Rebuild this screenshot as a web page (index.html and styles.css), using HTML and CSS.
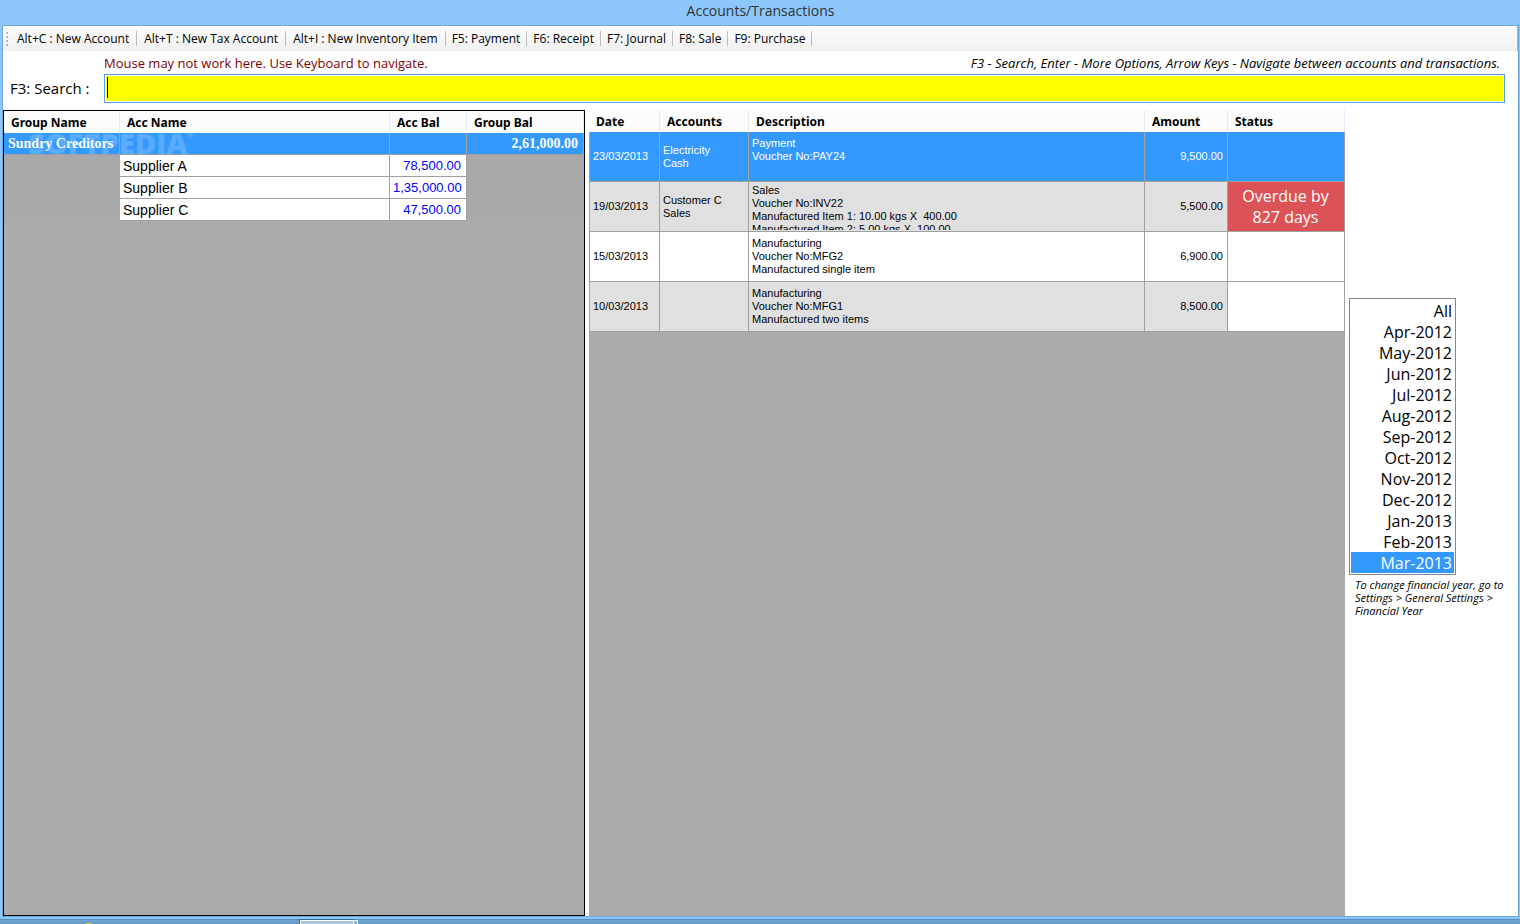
FILE: index.html
```html
<!DOCTYPE html>
<html lang="en">
<head>
  <meta charset="UTF-8" />
  <meta name="viewport" content="width=device-width, initial-scale=1.0" />
  <title>Accounts/Transactions</title>
  <link rel="stylesheet" href="styles.css">
</head>
<body>
  <div class="window">
    <h1 class="title">Accounts/Transactions</h1>
    <div class="client">
      <div class="toolbar">
        <span class="grip"></span>
        <button type="button">Alt+C : New Account</button>
        <button type="button">Alt+T : New Tax Account</button>
        <button type="button">Alt+I : New Inventory Item</button>
        <button type="button" class="fkey">F5: Payment</button>
        <button type="button" class="fkey">F6: Receipt</button>
        <button type="button" class="fkey">F7: Journal</button>
        <button type="button" class="fkey">F8: Sale</button>
        <button type="button" class="fkey">F9: Purchase</button>
      </div>

      <div class="search">
        <p class="warning">Mouse may not work here. Use Keyboard to navigate.</p>
        <p class="hint">F3 - Search, Enter - More Options, Arrow Keys - Navigate between accounts and transactions.</p>
        <label for="search">F3: Search :</label>
        <div class="field">
          <input type="text" id="search" />
          <span class="caret"></span>
        </div>
      </div>

      <div class="main">
        <div class="accounts">
          <table>
            <colgroup>
              <col class="c-group"><col class="c-name"><col class="c-bal"><col class="c-total">
            </colgroup>
            <thead>
              <tr><th>Group Name</th><th>Acc Name</th><th>Acc Bal</th><th>Group Bal</th></tr>
            </thead>
            <tbody>
              <tr class="group selected"><td>Sundry Creditors</td><td></td><td></td><td class="num">2,61,000.00</td></tr>
              <tr><td class="blank"></td><td>Supplier A</td><td class="num">78,500.00</td><td class="blank"></td></tr>
              <tr><td class="blank"></td><td>Supplier B</td><td class="num">1,35,000.00</td><td class="blank"></td></tr>
              <tr><td class="blank"></td><td>Supplier C</td><td class="num">47,500.00</td><td class="blank"></td></tr>
            </tbody>
          </table>
          <div class="watermark">SOFTPEDIA<sup>®</sup></div>
        </div>

        <div class="transactions">
          <table>
            <colgroup>
              <col class="c-date"><col class="c-accounts"><col><col class="c-amount"><col class="c-status">
            </colgroup>
            <thead>
              <tr><th>Date</th><th>Accounts</th><th>Description</th><th>Amount</th><th>Status</th></tr>
            </thead>
            <tbody>
              <tr class="selected">
                <td>23/03/2013</td>
                <td>Electricity<br>Cash</td>
                <td><div class="desc">Payment<br>Voucher No:PAY24<br>&nbsp;</div></td>
                <td class="num">9,500.00</td>
                <td class="status"></td>
              </tr>
              <tr>
                <td>19/03/2013</td>
                <td>Customer C<br>Sales</td>
                <td><div class="desc">Sales<br>Voucher No:INV22<br>Manufactured Item 1: 10.00 kgs X&nbsp; 400.00<br>Manufactured Item 2: 5.00 kgs X&nbsp; 100.00</div></td>
                <td class="num">5,500.00</td>
                <td class="status overdue">Overdue by<br>827 days</td>
              </tr>
              <tr>
                <td>15/03/2013</td>
                <td></td>
                <td><div class="desc">Manufacturing<br>Voucher No:MFG2<br>Manufactured single item</div></td>
                <td class="num">6,900.00</td>
                <td class="status"></td>
              </tr>
              <tr>
                <td>10/03/2013</td>
                <td></td>
                <td><div class="desc">Manufacturing<br>Voucher No:MFG1<br>Manufactured two items</div></td>
                <td class="num">8,500.00</td>
                <td class="status"></td>
              </tr>
            </tbody>
          </table>
        </div>

        <div class="period">
          <select size="13" aria-label="Month">
            <option>All</option>
            <option>Apr-2012</option>
            <option>May-2012</option>
            <option>Jun-2012</option>
            <option>Jul-2012</option>
            <option>Aug-2012</option>
            <option>Sep-2012</option>
            <option>Oct-2012</option>
            <option>Nov-2012</option>
            <option>Dec-2012</option>
            <option>Jan-2013</option>
            <option>Feb-2013</option>
            <option selected>Mar-2013</option>
          </select>
          <p>To change financial year, go to Settings &gt; General Settings &gt; Financial Year</p>
        </div>
      </div>
    </div>
  </div>

  <div class="taskbar">
    <span class="tray-dot"></span>
    <span class="task"></span>
    <span class="task-stack"></span>
  </div>
</body>
</html>
```
FILE: styles.css
```css
* {
  box-sizing: border-box;
}
body {
  margin: 0;
  height: 100vh;
  display: flex;
  flex-direction: column;
  overflow: hidden;
  background: #8bc7fb;
  color: #000;
  font-family: "Open Sans", "Noto Sans", sans-serif;
  font-size: 12px;
}
p {
  margin: 0;
}
.window {
  flex: 1;
  display: flex;
  flex-direction: column;
  padding: 0 1px 2px 2px;
  min-height: 0;
}
.title {
  margin: 0;
  height: 25px;
  line-height: 22px;
  text-align: center;
  font-size: 14px;
  font-weight: normal;
  color: #333;
}
.client {
  flex: 1;
  display: flex;
  flex-direction: column;
  min-height: 0;
  border: 1px solid #6ea6d8;
  background: #fff;
}

/* toolbar */
.toolbar {
  display: flex;
  align-items: center;
  height: 25px;
  padding-left: 3px;
  background: linear-gradient(#fdfdfd, #f0f0f0);
  border-right: 1px solid #b4b4b4;
}
.grip {
  width: 2px;
  height: 14px;
  margin-right: 2px;
  background: repeating-linear-gradient(#b8b8b8 0 2px, transparent 2px 4px);
}
.toolbar button {
  height: 15px;
  padding: 0 7px;
  border: 0;
  border-right: 1px solid #bdbdbd;
  background: none;
  font: inherit;
  line-height: 14px;
  white-space: nowrap;
}
.toolbar .fkey {
  padding: 0 6px;
}

/* search */
.search {
  display: grid;
  grid-template-columns: 94px auto 1fr;
  grid-template-rows: 22px 30px;
  padding: 1px 13px 6px 7px;
}
.warning {
  grid-column: 2;
  line-height: 22px;
  font-size: 13px;
  color: #800000;
}
.hint {
  line-height: 22px;
  padding-right: 5px;
  text-align: right;
  font-size: 13px;
  font-style: italic;
}
.search label {
  grid-column: 1;
  line-height: 28px;
  font-size: 15px;
}
.field {
  position: relative;
  grid-column: 2 / 4;
}
.field input {
  display: block;
  width: 100%;
  height: 29px;
  padding: 0 4px;
  border: 1px solid #569de5;
  outline: 0;
  box-shadow: inset 0 0 0 1px #fff;
  background: #ff0;
  font: inherit;
  font-size: 15px;
}
.caret {
  position: absolute;
  left: 3px;
  top: 3px;
  width: 1px;
  height: 21px;
  background: #000;
}

/* grids */
.main {
  flex: 1;
  display: flex;
  min-height: 0;
}
table {
  width: 100%;
  table-layout: fixed;
  border-collapse: separate;
  border-spacing: 0;
}
th {
  padding: 0 7px;
  border-right: 1px solid #e3eefb;
  background: #fcfcfc;
  text-align: left;
  font-family: "Noto Sans", sans-serif;
  font-size: 12px;
  line-height: 21px;
}
td {
  border-right: 1px solid #a0a0a0;
  border-bottom: 1px solid #a0a0a0;
}
.num {
  text-align: right;
}
.accounts {
  position: relative;
  flex: 0 0 582px;
  border: 1px solid #000;
  background: #ababab;
}
.accounts th {
  height: 22px;
}
.accounts td {
  height: 22px;
  padding: 0 4px 0 3px;
  background: #fff;
  font: 14px/20px "Liberation Sans", sans-serif;
}
.accounts .num {
  padding-right: 5px;
  font-size: 13px;
  color: #00f;
}
.accounts .blank {
  background: #a9a9a9;
  border-color: #a9a9a9;
}
.accounts .group td {
  padding: 1px 5px 0 4px;
  font-family: "Liberation Serif", serif;
  font-size: 14px;
  font-weight: bold;
}
.c-group {
  width: 116px;
}
.c-name {
  width: 270px;
}
.c-bal {
  width: 77px;
}
.c-total {
  width: 117px;
}
.watermark {
  position: absolute;
  left: 24px;
  top: 16px;
  font-size: 29px;
  font-weight: 800;
  line-height: 32px;
  color: rgba(255, 255, 255, 0.2);
}
.watermark sup {
  font-size: 8px;
  line-height: 0;
  vertical-align: 16px;
}
.transactions {
  flex: 1;
  max-width: 756px;
  margin-left: 4px;
  background: #ababab;
}
.transactions th {
  height: 22px;
}
.transactions td {
  height: 50px;
  padding: 0 4px 0 3px;
  background: #fff;
  font: 11px/13px "Liberation Sans", sans-serif;
}
.transactions td:first-child {
  border-left: 1px solid #a0a0a0;
}
.transactions tr:nth-child(even) td:not(.status) {
  background: #e0e0e0;
}
.desc {
  max-height: 46px;
  overflow: hidden;
}
.transactions .status {
  text-align: center;
  font: 16px/21px "Open Sans", sans-serif;
}
.transactions .overdue {
  background: #db5356;
  color: #fff;
}
.c-date {
  width: 71px;
}
.c-accounts {
  width: 89px;
}
.c-amount {
  width: 83px;
}
.c-status {
  width: 117px;
}
tr.selected td,
.accounts .selected .num {
  background: #39f;
  color: #fff;
}

/* months */
.period {
  flex: 0 0 172px;
  padding: 188px 8px 0 4px;
}
.period select {
  display: block;
  width: 107px;
  height: 277px;
  padding: 1px;
  border: 1px solid #828790;
  border-radius: 0;
  outline: 0;
  overflow: hidden;
  background: #fff;
  font: 16px/21px "Open Sans", sans-serif;
}
.period option {
  height: 21px;
  min-height: 21px;
  padding: 0 2px;
  line-height: 21px;
  text-align: right;
  color: #000;
}
.period option:checked {
  background: #39f linear-gradient(#39f, #39f);
  color: #fff;
}
.period p {
  padding: 3px 0 0 6px;
  font-size: 11px;
  font-style: italic;
  line-height: 13px;
}

/* top edge of the desktop taskbar */
.taskbar {
  display: flex;
  height: 5px;
  border-top: 1px solid #5590c6;
  background: linear-gradient(#6fa5d2, #6497c4);
}
.tray-dot {
  width: 6px;
  height: 1px;
  margin: 3px 208px 0 86px;
  background: #c2cc3c;
}
.task {
  width: 54px;
  border: 1px solid #fff;
  border-bottom: 0;
  outline: 1px solid #3f6a91;
  background: #a9c6df;
}
.task-stack {
  width: 4px;
  border: 1px solid #fff;
  border-width: 1px 1px 0 0;
  background: #8fb4d6;
}
```
